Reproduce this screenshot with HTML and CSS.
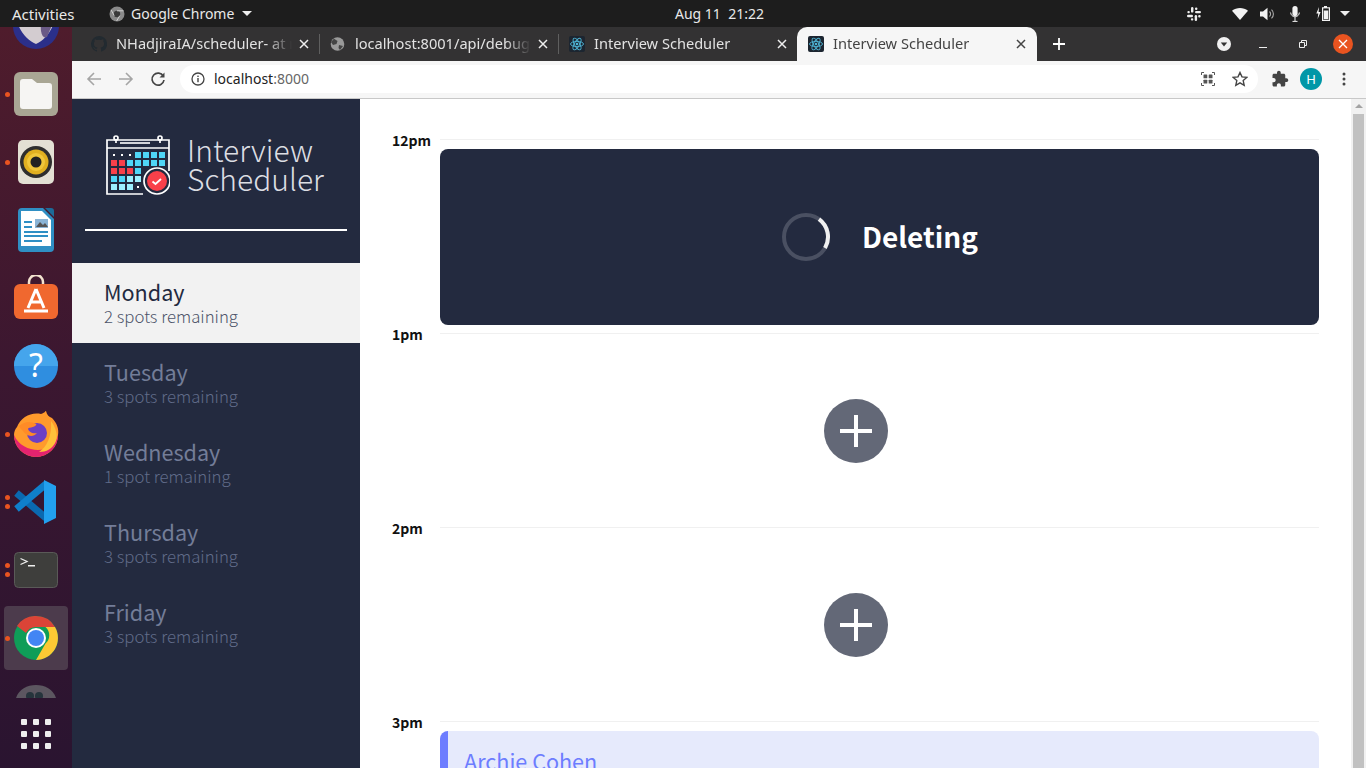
FILE: index.html
```html
<!DOCTYPE html>
<html lang="en">
<head>
<meta charset="utf-8">
<title>Interview Scheduler</title>
<link rel="stylesheet" href="styles.css">
</head>
<body>
<header class="topbar">
  <div class="top-left">
    <span class="activities">Activities</span>
    <span class="appmenu">
      <svg class="app-ic" viewBox="0 0 16 16"><circle cx="8" cy="8" r="7.5" fill="#8a8a8a"/><circle cx="8" cy="8" r="3.2" fill="#3a3a3a"/><path d="M8 4.8h6.5M10.8 9.6 7.6 15M5.2 9.6 2 3.8" stroke="#d0d0d0" stroke-width="1"/></svg>
      <span>Google Chrome</span>
      <i class="caret"></i>
    </span>
  </div>
  <time class="clock">Aug 11&nbsp; 21:22</time>
  <div class="tray">
    <svg class="t-slack" viewBox="0 0 14 14"><g fill="#eee"><rect x="4" y="0" width="2.4" height="5.6" rx="1.2"/><rect x="8" y="3.9" width="6" height="2.4" rx="1.2"/><rect x="7.7" y="8" width="2.4" height="6" rx="1.2"/><rect x="0" y="7.8" width="6" height="2.4" rx="1.2"/><rect x="8" y="0.5" width="2.4" height="2.4" rx="1"/><rect x="11.2" y="8" width="2.4" height="2.4" rx="1"/><rect x="3.9" y="11.2" width="2.4" height="2.4" rx="1"/><rect x="0.4" y="3.9" width="2.4" height="2.4" rx="1"/></g></svg>
    <svg class="t-wifi" viewBox="0 0 16 12"><path d="M0 2.8C4.5-.9 11.5-.9 16 2.8L8 12z" fill="#f2f2f2"/></svg>
    <svg class="t-vol" viewBox="0 0 15 14"><path d="M0 4.5h3L7.5.8v12.4L3 9.5H0z" fill="#f2f2f2"/><path d="M9.5 4.5a3.4 3.4 0 0 1 0 5M11.5 2.6a6 6 0 0 1 0 8.8" fill="none" stroke="#aaa" stroke-width="1.1"/></svg>
    <svg class="t-mic" viewBox="0 0 10 16"><rect x="2.4" y="0" width="5.2" height="10" rx="2.6" fill="#f2f2f2"/><path d="M.7 6.5a4.3 4.3 0 0 0 8.6 0M5 11v4M2.5 15.4h5" fill="none" stroke="#f2f2f2" stroke-width="1"/></svg>
    <svg class="t-bat" viewBox="0 0 15 15"><path d="M3 1 .3 7.6h2L1.6 13 4.600 6H2.600z" fill="#f2f2f2"/><path d="M8 0h3v1.200h3V15H6V1.200h2z" fill="#f2f2f2"/><rect x="7.200" y="2.400" width="5.600" height="11.400" fill="#1d1d1d"/><rect x="7.800" y="4.500" width="4.400" height="8.700" fill="#f2f2f2"/></svg>
    <i class="caret tray-caret"></i>
  </div>
</header>

<div class="desktop">
  <nav class="dock">
    <div class="dock-item first">
      <svg class="ic-46" viewBox="0 0 46 46"><circle cx="23" cy="23" r="23" fill="#2b2f8a"/><path d="M2 12c10-1 20 2 26 8l14-5c-2 12-10 22-19 26C13 37 5 26 2 12z" fill="#d3ccd0"/><path d="M28 20l14-5-8 19c-4 2-7-3-6-14z" fill="#6a5a86"/></svg>
    </div>
    <div class="dock-item"><i class="dot dot-mid"></i>
      <svg class="ic-44" viewBox="0 0 44 44"><rect width="44" height="44" rx="6" fill="#a9a694"/><path d="M6 10a3 3 0 0 1 3-3h9l5 4h12a3 3 0 0 1 3 3v20a3 3 0 0 1-3 3H9a3 3 0 0 1-3-3z" fill="#f6f5f3"/></svg>
    </div>
    <div class="dock-item"><i class="dot dot-mid"></i>
      <svg class="ic-36" viewBox="0 0 36 44"><rect width="36" height="44" rx="5" fill="#e3e0d4"/><circle cx="18" cy="22" r="16" fill="#2e2e2e"/><circle cx="18" cy="22" r="12.500" fill="#e0b020"/><circle cx="18" cy="22" r="9" fill="#efc63a"/><circle cx="18" cy="22" r="5.500" fill="#222"/></svg>
    </div>
    <div class="dock-item">
      <svg class="ic-36" viewBox="0 0 36 44"><path d="M4 0h21l11 11v29a4 4 0 0 1-4 4H4a4 4 0 0 1-4-4V4a4 4 0 0 1 4-4z" fill="#2f8fc4"/><path d="M3 3h21l9 9v26H3z" fill="#fff"/><path d="M27 0h6a3 3 0 0 1 3 3v6z" fill="#1d6b99"/><rect x="6" y="13" width="8" height="2" fill="#2f8fc4"/><rect x="6" y="18" width="8" height="2" fill="#2f8fc4"/><rect x="17" y="11" width="13" height="9" fill="#8ab4d6"/><path d="M18 19l4-5 3 3 2-2 3 4z" fill="#555"/><rect x="6" y="23" width="24" height="2" fill="#2f8fc4"/><rect x="6" y="27" width="24" height="2" fill="#2f8fc4"/><rect x="6" y="32" width="18" height="2" fill="#2f8fc4"/></svg>
    </div>
    <div class="dock-item">
      <svg class="ic-46" viewBox="0 0 46 46"><path d="M16 10V7a7 7 0 0 1 14 0v3" fill="none" stroke="#f3e3cf" stroke-width="2.500"/><rect x="1" y="9" width="44" height="35" rx="6" fill="#f0682f"/><path d="M23 14 15 33M23 14l8 19M18 27h10M11 36h24" stroke="#fff" stroke-width="3" fill="none"/></svg>
    </div>
    <div class="dock-item">
      <svg class="ic-44" viewBox="0 0 44 44"><circle cx="22" cy="22" r="22" fill="#2f8ee0"/><path d="M0 22a22 22 0 0 1 44 0z" fill="#45a5ec"/><text class="help-q" x="22" y="33" text-anchor="middle">?</text></svg>
    </div>
    <div class="dock-item"><i class="dot dot-mid"></i>
      <svg class="ic-46" viewBox="0 0 46 46"><path d="M4 16C8 6 18 1 28 3c4-1 4-3 5-3 1 4 3 6 6 7 5 5 7 11 6 17A22 22 0 0 1 1 24c0-3 1-6 3-8z" fill="#ff9a2c"/><path d="M1 24a22 22 0 0 0 44 0c-3 11-11 15-20 15S5 34 1 24z" fill="#e3236f"/><path d="M38 10c5 7 7 14 5 20-3 8-10 11-17 11 8-5 13-16 12-31z" fill="#ffc13a"/><circle cx="24" cy="22" r="10" fill="#6c3fc4"/><path d="M6 15c6-5 12-5 17-2 2 1-4 4-8 4 0 4 5 6 9 5-4 5-11 3-14-2-2-2-3-3-4-5z" fill="#ff8b26"/></svg>
    </div>
    <div class="dock-item"><i class="dot dot-a"></i><i class="dot dot-b"></i>
      <svg class="ic-44" viewBox="0 0 44 44"><path d="M2.500 13 32 38" fill="none" stroke="#0a69b0" stroke-width="7"/><path d="M2.500 29 32 4" fill="none" stroke="#0f7fcb" stroke-width="7"/><path d="M30 0l12 6v32l-12 6z" fill="#22a0ee"/></svg>
    </div>
    <div class="dock-item"><i class="dot dot-a"></i><i class="dot dot-b"></i>
      <svg class="ic-term" viewBox="0 0 44 36"><rect x=".5" y=".5" width="43" height="35" rx="4" fill="#3e3e3c" stroke="#5a5a58"/><path d="M6.500 6.500 13 9.500 6.500 12.500" fill="none" stroke="#eee" stroke-width="1.300"/><rect x="14" y="13" width="7" height="1.500" fill="#eee"/></svg>
    </div>
    <div class="dock-item active"><i class="dot dot-mid"></i>
      <svg class="ic-44" viewBox="0 0 44 44"><circle cx="22" cy="22" r="22" fill="#0f9d58"/><path d="M22 0a22 22 0 0 1 19 11H22a11 11 0 0 0-10 6L3 10A22 22 0 0 1 22 0z" fill="#db4437"/><path d="M41 11a22 22 0 0 1-19 33l9.500-16.500a11 11 0 0 0 0-16.500z" fill="#fcc934"/><circle cx="22" cy="22" r="10" fill="#fff"/><circle cx="22" cy="22" r="8" fill="#4285f4"/></svg>
    </div>
    <div class="dock-item peek">
      <svg class="ic-peek" viewBox="0 0 40 13"><path d="M0 13C3 4 11 0 20 0s17 4 20 13z" fill="#5c5660"/><circle cx="14" cy="11" r="4" fill="#26343c"/><circle cx="23" cy="11" r="4" fill="#26343c"/></svg>
    </div>
    <div class="show-apps">
      <i></i><i></i><i></i><i></i><i></i><i></i><i></i><i></i><i></i>
    </div>
  </nav>

  <div class="browser">
    <div class="tabstrip">
      <div class="tab">
        <svg class="fav" viewBox="0 0 16 16"><path d="M8 0a8 8 0 0 0-2.500 15.600c.4.100.5-.2.500-.4v-1.400c-2.200.5-2.700-1-2.700-1-.4-.9-.9-1.200-.9-1.200-.7-.5.100-.5.100-.5.800.100 1.200.8 1.200.8.700 1.200 1.900.9 2.300.7.100-.5.300-.9.500-1.100-1.800-.2-3.600-.9-3.600-4 0-.9.300-1.600.8-2.100-.1-.2-.4-1 .1-2.100 0 0 .7-.2 2.200.8a7.600 7.600 0 0 1 4 0c1.500-1 2.200-.8 2.200-.8.500 1.100.2 1.900.1 2.100.5.500.8 1.200.8 2.100 0 3.100-1.900 3.800-3.600 4 .3.200.5.700.5 1.500v2.200c0 .2.100.5.600.4A8 8 0 0 0 8 0z" fill="#222a30"/></svg>
        <span class="tab-title">NHadjiraIA/scheduler- at master</span>
        <svg class="tab-x" viewBox="0 0 10 10"><path d="M1 1l8 8M9 1l-8 8" stroke="#eee" stroke-width="1.500"/></svg>
      </div>
      <div class="tab">
        <svg class="fav" viewBox="0 0 16 16"><circle cx="7.500" cy="8" r="6.800" fill="#9a9a9a"/><path d="M4 2.800 7.500 5 6.500 8 3 9 1 6zM9 9l4 1-3 4-1.500-2z" fill="#444"/></svg>
        <span class="tab-title">localhost:8001/api/debug/reset</span>
        <svg class="tab-x" viewBox="0 0 10 10"><path d="M1 1l8 8M9 1l-8 8" stroke="#eee" stroke-width="1.500"/></svg>
      </div>
      <div class="tab no-sep">
        <svg class="fav" viewBox="0 0 16 16"><rect width="16" height="16" rx="2" fill="#1c2530"/><g fill="none" stroke="#4fb6d6" stroke-width=".9"><ellipse cx="8" cy="8" rx="6.500" ry="2.600"/><ellipse cx="8" cy="8" rx="6.500" ry="2.600" transform="rotate(60 8 8)"/><ellipse cx="8" cy="8" rx="6.500" ry="2.600" transform="rotate(120 8 8)"/></g><circle cx="8" cy="8" r="1.300" fill="#4fb6d6"/></svg>
        <span class="tab-title">Interview Scheduler</span>
        <svg class="tab-x" viewBox="0 0 10 10"><path d="M1 1l8 8M9 1l-8 8" stroke="#eee" stroke-width="1.500"/></svg>
      </div>
      <div class="tab current">
        <svg class="fav" viewBox="0 0 16 16"><rect width="16" height="16" rx="2" fill="#1c2530"/><g fill="none" stroke="#4fb6d6" stroke-width=".9"><ellipse cx="8" cy="8" rx="6.500" ry="2.600"/><ellipse cx="8" cy="8" rx="6.500" ry="2.600" transform="rotate(60 8 8)"/><ellipse cx="8" cy="8" rx="6.500" ry="2.600" transform="rotate(120 8 8)"/></g><circle cx="8" cy="8" r="1.300" fill="#4fb6d6"/></svg>
        <span class="tab-title">Interview Scheduler</span>
        <svg class="tab-x" viewBox="0 0 10 10"><path d="M1 1l8 8M9 1l-8 8" stroke="#444" stroke-width="1.500"/></svg>
      </div>
      <svg class="newtab" viewBox="0 0 12 12"><path d="M6 0v12M0 6h12" stroke="#fff" stroke-width="1.800"/></svg>
      <div class="winctl">
        <svg class="w-drop" viewBox="0 0 14 14"><circle cx="7" cy="7" r="7" fill="#f1f1f1"/><path d="M3.800 5.500h6.400L7 9.500z" fill="#333"/></svg>
        <svg class="w-min" viewBox="0 0 8 2"><rect y="0" width="8" height="1" fill="#eee"/></svg>
        <svg class="w-max" viewBox="0 0 8 8"><path d="M.5 2.500h5v5h-5zM2.500 2.500v-2h5v5h-2" fill="none" stroke="#eee"/></svg>
        <svg class="w-close" viewBox="0 0 20 20"><circle cx="10" cy="10" r="10" fill="#e95420"/><path d="M6 6l8 8M14 6l-8 8" stroke="#fff" stroke-width="1.300"/></svg>
      </div>
    </div>

    <div class="toolbar">
      <svg class="nav-ic" viewBox="0 0 16 16"><path d="M15 8H2M8 2 2 8l6 6" fill="none" stroke="#a5a5a5" stroke-width="1.600"/></svg>
      <svg class="nav-ic" viewBox="0 0 16 16"><path d="M1 8h13M8 2l6 6-6 6" fill="none" stroke="#a5a5a5" stroke-width="1.600"/></svg>
      <svg class="nav-ic" viewBox="0 0 16 16"><path d="M13.300 5.200A6 6 0 1 0 14 9" fill="none" stroke="#444" stroke-width="1.700"/><path d="M14.500 1.500v5h-5z" fill="#444"/></svg>
      <div class="omnibox">
        <svg class="info" viewBox="0 0 14 14"><circle cx="7" cy="7" r="6" fill="none" stroke="#444" stroke-width="1.300"/><rect x="6.300" y="6" width="1.400" height="4.200" fill="#444"/><rect x="6.300" y="3.600" width="1.400" height="1.400" fill="#444"/></svg>
        <span class="url">localhost<span class="url-port">:8000</span></span>
        <svg class="omni-r qr" viewBox="0 0 14 14"><path d="M.5 3V.5H3M11 .5h2.500V3M13.500 11v2.500H11M3 13.500H.5V11" fill="none" stroke="#555"/><g fill="#555"><rect x="2.500" y="2.500" width="3.800" height="3.800" rx=".6"/><rect x="7.700" y="2.500" width="3.800" height="3.800" rx=".6"/><rect x="2.500" y="7.700" width="3.800" height="3.800" rx=".6"/><rect x="7.700" y="7.700" width="3.800" height="3.800" rx=".6"/></g></svg>
        <svg class="omni-r star" viewBox="0 0 16 16"><path d="m8 1.500 2 4.400 4.800.5-3.600 3.200 1 4.700L8 11.900l-4.200 2.400 1-4.700L1.200 6.400 6 5.900z" fill="none" stroke="#444" stroke-width="1.400"/></svg>
      </div>
      <svg class="puzzle" viewBox="0 0 24 24"><path d="M20.500 11H19V7c0-1.100-.9-2-2-2h-4V3.500C13 2.120 11.880 1 10.500 1S8 2.120 8 3.500V5H4c-1.100 0-1.990.9-1.990 2v3.800H3.500c1.490 0 2.700 1.210 2.700 2.700s-1.210 2.700-2.700 2.700H2V20c0 1.100.9 2 2 2h3.800v-1.500c0-1.490 1.210-2.700 2.700-2.700 1.490 0 2.700 1.210 2.700 2.700V22H17c1.100 0 2-.9 2-2v-4h1.500c1.380 0 2.500-1.120 2.500-2.500S21.880 11 20.500 11z" fill="#444"/></svg>
      <span class="avatar">H</span>
      <svg class="kebab" viewBox="0 0 4 14"><circle cx="2" cy="2" r="1.500" fill="#444"/><circle cx="2" cy="7" r="1.500" fill="#444"/><circle cx="2" cy="12" r="1.500" fill="#444"/></svg>
    </div>

    <div class="page">
      <aside class="sidebar">
        <div class="brand">
          <svg class="logo" viewBox="0 0 64 60">
            <g fill="none" stroke="#fff" stroke-width="1.700">
              <path d="M37 59H1V5h62v31"/>
              <path d="M1 13h62"/>
              <path d="M14 8h30" stroke-width="1.600"/>
              <circle cx="10" cy="3" r="2"/><circle cx="54" cy="3" r="2"/>
              <path d="M10 5v3M54 5v3"/>
            </g>
            <g fill="#fff"><rect x="7" y="19" width="2" height="2"/><rect x="15" y="19" width="2" height="2"/><rect x="23" y="19" width="2" height="2"/><rect x="31" y="51" width="2" height="2"/></g>
            <g fill="#4fd6f7">
              <rect x="29" y="17" width="6" height="6"/><rect x="37" y="17" width="6" height="6"/><rect x="45" y="17" width="6" height="6"/><rect x="53" y="17" width="6" height="6"/>
              <rect x="21" y="25" width="6" height="6"/><rect x="29" y="25" width="6" height="6"/><rect x="37" y="25" width="6" height="6"/><rect x="45" y="25" width="6" height="6"/><rect x="53" y="25" width="6" height="6"/>
              <rect x="29" y="33" width="6" height="6"/>
              <rect x="5" y="41" width="6" height="6"/><rect x="13" y="41" width="6" height="6"/>
            </g>
            <g fill="#f9404a">
              <rect x="5" y="25" width="6" height="6"/><rect x="13" y="25" width="6" height="6"/>
              <rect x="5" y="33" width="6" height="6"/><rect x="13" y="33" width="6" height="6"/><rect x="21" y="33" width="6" height="6"/>
            </g>
            <g fill="#9df0ff">
              <rect x="21" y="41" width="6" height="6"/><rect x="29" y="41" width="6" height="6"/>
              <rect x="5" y="49" width="6" height="6"/><rect x="13" y="49" width="6" height="6"/><rect x="21" y="49" width="6" height="6"/>
            </g>
            <circle cx="51" cy="46" r="13" fill="#232a3f" stroke="#fff" stroke-width="1.700"/>
            <circle cx="51" cy="46" r="10" fill="#f9404a"/>
            <path d="M46.500 46.500l3 2.500 5.500-5" fill="none" stroke="#fff" stroke-width="1.800"/>
          </svg>
          <div class="brand-name">Interview<br>Scheduler</div>
        </div>
        <hr class="divider">
        <ul class="days">
          <li class="day selected"><div class="day-name">Monday</div><div class="day-spots">2 spots remaining</div></li>
          <li class="day"><div class="day-name">Tuesday</div><div class="day-spots">3 spots remaining</div></li>
          <li class="day"><div class="day-name">Wednesday</div><div class="day-spots">1 spot remaining</div></li>
          <li class="day"><div class="day-name">Thursday</div><div class="day-spots">3 spots remaining</div></li>
          <li class="day"><div class="day-name">Friday</div><div class="day-spots">3 spots remaining</div></li>
        </ul>
      </aside>

      <main class="schedule">
        <article class="slot">
          <h4 class="time">12pm</h4>
          <div class="slot-body">
            <div class="status-card">
              <svg class="spinner" viewBox="0 0 50 50"><circle cx="25" cy="25" r="22" fill="none" stroke="#4a5062" stroke-width="4"/><path d="M38 7.200A22 22 0 0 1 44 36" fill="none" stroke="#f0f0f0" stroke-width="4"/></svg>
              <span class="status-text">Deleting</span>
            </div>
          </div>
        </article>
        <article class="slot">
          <h4 class="time">1pm</h4>
          <div class="slot-body">
            <div class="empty"><svg class="add" viewBox="0 0 64 64"><circle cx="32" cy="32" r="32" fill="#636877"/><path d="M32 16v32M16 32h32" stroke="#fff" stroke-width="4"/></svg></div>
          </div>
        </article>
        <article class="slot">
          <h4 class="time">2pm</h4>
          <div class="slot-body">
            <div class="empty"><svg class="add" viewBox="0 0 64 64"><circle cx="32" cy="32" r="32" fill="#636877"/><path d="M32 16v32M16 32h32" stroke="#fff" stroke-width="4"/></svg></div>
          </div>
        </article>
        <article class="slot">
          <h4 class="time">3pm</h4>
          <div class="slot-body">
            <div class="booked"><div class="student">Archie Cohen</div></div>
          </div>
        </article>
      </main>

      <div class="scrollbar">
        <i class="sb-up"></i>
        <div class="sb-thumb"></div>
      </div>
    </div>
  </div>
</div>
</body>
</html>
```

FILE: styles.css
```css
* { box-sizing: border-box; }
html, body { margin: 0; height: 768px; overflow: hidden; }
body { font-family: "Noto Sans", sans-serif; background: #1d1d1d; }
svg { display: block; flex: none; }
i { display: block; }

/* top bar */
.topbar { height: 27px; background: #1d1d1d; color: #e9e9e9; display: flex; align-items: center; font-size: 14px; }
.top-left { width: 675px; display: flex; align-items: center; padding-left: 12px; }
.activities { width: 97px; font-size: 15px; }
.appmenu { display: flex; align-items: center; }
.app-ic { width: 16px; height: 16px; margin: 0 6px 0 0; }
.caret { width: 0; height: 0; border: 5px solid transparent; border-top: 5px solid #eee; border-bottom: 0; margin-left: 8px; }
.clock { width: 460px; white-space: nowrap; }
.tray { display: flex; align-items: center; }
.t-slack { width: 14px; height: 14px; margin-left: 52px; }
.t-wifi { width: 16px; height: 12px; margin-left: 31px; }
.t-vol { width: 15px; height: 14px; margin-left: 12px; }
.t-mic { width: 10px; height: 16px; margin-left: 15px; }
.t-bat { width: 15px; height: 15px; margin-left: 16px; }
.tray-caret { margin-left: 9px; }

/* dock */
.desktop { display: flex; height: 741px; }
.dock { width: 72px; flex: none; height: 741px; overflow: hidden; display: flex; flex-direction: column; background: linear-gradient(180deg, #4f1c2c 0%, #3c1730 45%, #2a1430 100%); }
.dock-item { position: relative; height: 68px; flex: none; display: flex; align-items: center; justify-content: center; }
.dock-item.first { height: 33px; align-items: flex-end; overflow: hidden; padding-bottom: 11px; }
.dock-item.active::before { content: ""; position: absolute; left: 4px; right: 4px; top: 2px; bottom: 2px; border-radius: 4px; background: #4c3b4c; }
.dock-item.active svg { position: relative; }
.dock-item.peek { height: 25px; align-items: flex-start; padding-top: 13px; }
.ic-44 { width: 44px; height: 44px; }
.ic-36 { width: 36px; height: 44px; }
.ic-46 { width: 46px; height: 46px; }
.ic-term { width: 44px; height: 36px; }
.ic-peek { width: 40px; height: 13px; }
.help-q { font-family: "Noto Sans", sans-serif; font-size: 32px; font-weight: 400; fill: #fff; }
.dot { position: absolute; left: 5px; width: 5px; height: 5px; border-radius: 50%; background: #e95420; }
.dot-mid { top: 32px; }
.dot-a { top: 27px; }
.dot-b { top: 36px; }
.show-apps { flex: none; margin-top: 22px; padding: 0 21px; display: grid; grid-template-columns: repeat(3, 6px); gap: 6px; }
.show-apps i { height: 6px; border-radius: 1px; background: #eee; }

/* browser */
.browser { flex: 1; min-width: 0; display: flex; flex-direction: column; }
.tabstrip { height: 34px; background: #333233; display: flex; padding-left: 9px; align-items: stretch; flex: none; }
.tab { width: 239px; flex: none; display: flex; align-items: center; padding-left: 10px; color: #e2e2e2; font-size: 14.6px; position: relative; }
.tab::after { content: ""; position: absolute; right: 0; top: 7px; height: 20px; width: 1px; background: #5f5f5f; }
.tab.no-sep::after, .tab.current::after { display: none; }
.tab.current { background: #f6f6f6; color: #444; border-radius: 10px 10px 0 0; margin-left: -1px; padding-left: 11px; width: 240px; }
.fav { width: 16px; height: 16px; margin-right: 9px; }
.tab-title { width: 178px; line-height: 20px; margin-top: -3px; white-space: nowrap; overflow: hidden; -webkit-mask-image: linear-gradient(90deg, #000 150px, transparent 176px); mask-image: linear-gradient(90deg, #000 150px, transparent 176px); }
.tab-x { width: 10px; height: 10px; margin-left: 5px; }
.newtab { width: 12px; height: 12px; margin: 11px 0 0 16px; }
.winctl { flex: 1; display: flex; align-items: center; }
.w-drop { width: 14px; height: 14px; margin-left: 152px; }
.w-min { width: 8px; height: 2px; margin: 7px 0 0 28px; }
.w-max { width: 8px; height: 8px; margin-left: 32px; }
.w-close { width: 20px; height: 20px; margin-left: 26px; }

.toolbar { height: 38px; flex: none; background: #f6f6f6; border-bottom: 1px solid #c8c8c8; display: flex; align-items: center; padding: 0 0 2px 14px; }
.nav-ic { width: 16px; height: 16px; margin-right: 16px; }
.omnibox { width: 1078px; height: 28px; margin-left: -2px; border-radius: 14px; background: #fff; display: flex; align-items: center; padding-left: 11px; }
.info { width: 14px; height: 14px; margin-right: 9px; }
.url { font-size: 14px; color: #222; flex: 1; }
.url-port { color: #666; }
.omni-r { width: 14px; height: 14px; }
.star { width: 16px; height: 16px; margin: 0 10px 0 17px; }
.puzzle { width: 18px; height: 18px; margin-left: 13px; }
.avatar { width: 22px; height: 22px; margin-left: 11px; border-radius: 50%; background: #0097a7; color: #fff; font-size: 13px; display: flex; align-items: center; justify-content: center; }
.kebab { width: 4px; height: 14px; margin-left: 20px; }

/* app page */
.page { flex: 1; min-height: 0; display: flex; background: #fff; overflow: hidden; font-family: "Noto Sans CJK SC", "Noto Sans", sans-serif; }
.sidebar { width: 288px; flex: none; background: #232a3f; padding-top: 36px; }
.brand { display: flex; align-items: center; padding-left: 34px; height: 60px; }
.logo { width: 64px; height: 60px; }
.brand-name { margin-left: 17px; color: #dcdee3; font-size: 30px; font-weight: 300; line-height: 29px; margin-top: -3px; }
.divider { margin: 34px 13px 32px; border: 0; height: 2px; background: #fff; }
.days { list-style: none; margin: 0; padding: 0; }
.day { height: 80px; padding: 15px 0 0 32px; color: #737d98; }
.day.selected { background: #f2f2f2; color: #232a3f; }
.day-name { font-size: 21.6px; line-height: 28px; }
.day-spots { font-size: 16.8px; line-height: 20px; font-weight: 300; color: #616c8a; }
.selected .day-spots { color: #4d5469; }

.schedule { flex: 1; min-width: 0; padding: 40px 32px 0; overflow: hidden; }
.slot { display: flex; }
.time { width: 48px; flex: none; margin: -7px 0 0; font-size: 14px; line-height: 16px; font-weight: 700; color: #111; }
.slot-body { flex: 1; min-width: 0; border-top: 1px solid #f0f0f0; padding: 9px 0 8px; }
.status-card { height: 176px; border-radius: 8px; background: #232a3f; display: flex; align-items: center; justify-content: center; color: #fff; }
.spinner { width: 50px; height: 50px; margin-right: 31px; }
.status-text { font-size: 28px; font-weight: 700; line-height: 36px; margin-top: -2px; }
.empty { height: 176px; display: flex; align-items: center; justify-content: center; }
.add { width: 64px; height: 64px; margin-right: 48px; }
.booked { height: 176px; border-radius: 8px; background: #e6eafc; border-left: 8px solid #6d7dff; padding: 16px; }
.student { font-size: 21.6px; line-height: 28px; color: #6d7dff; }

.scrollbar { width: 15px; flex: none; background: #f1f1f1; display: flex; flex-direction: column; align-items: center; }
.sb-up { width: 0; height: 0; border: 4px solid transparent; border-bottom: 4px solid #a3a3a3; border-top: 0; margin: 5px 0 6px; }
.sb-thumb { width: 11px; flex: 1; background: #c1c1c1; }
```
